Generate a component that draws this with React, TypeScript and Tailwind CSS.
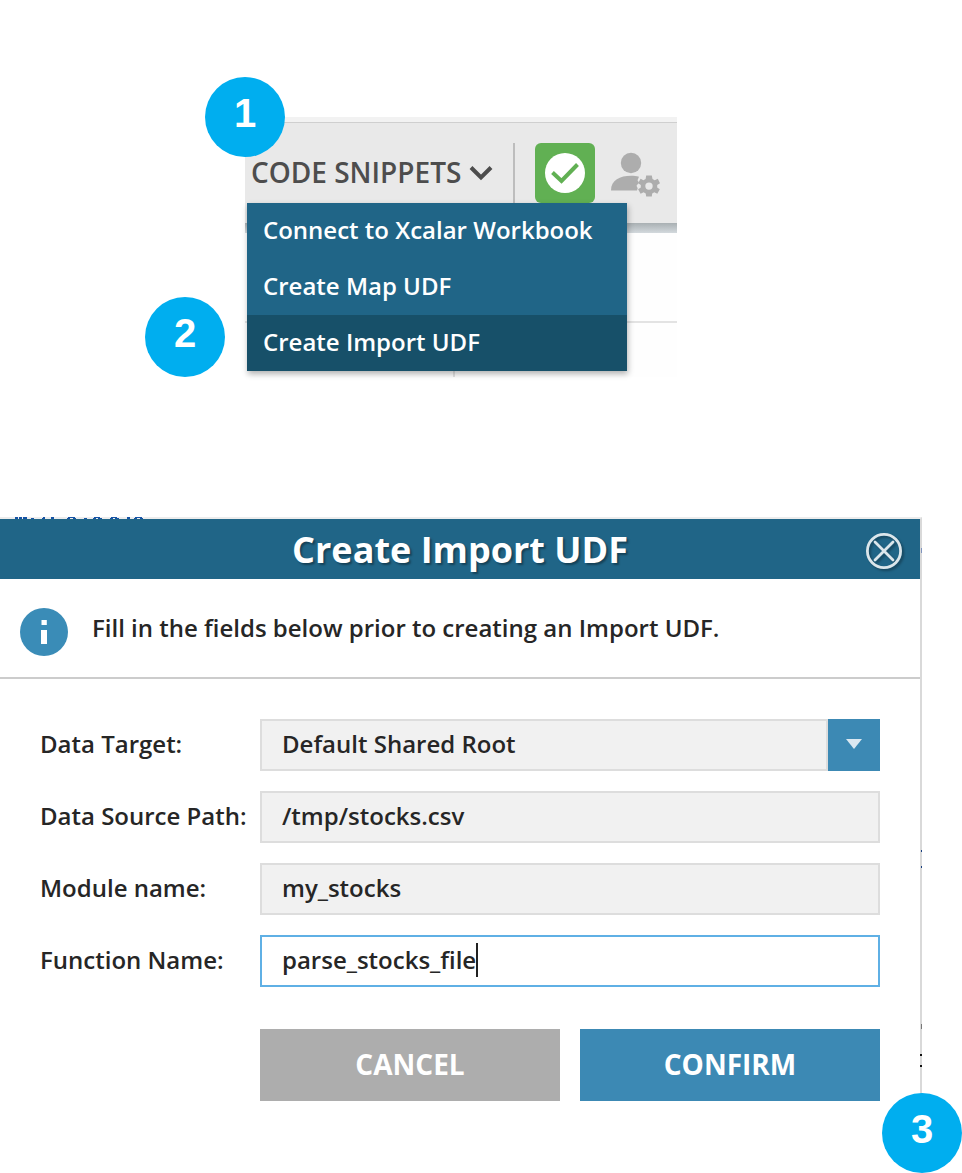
import { ReactNode, useState } from "react";

const menuItems = ["Connect to Xcalar Workbook", "Create Map UDF", "Create Import UDF"];

const inputClass =
  "h-[52px] w-full rounded-none border-2 px-5 text-2xl font-semibold leading-8 text-[#262626] outline-none";

function StepBadge({ children, className }: { children: ReactNode; className: string }) {
  return (
    <div
      className={`absolute z-20 flex size-20 items-center justify-center rounded-full bg-[#00aeef] pb-2 font-['Liberation_Sans',sans-serif] text-[40px] font-bold leading-[44px] text-white ${className}`}
    >
      {children}
    </div>
  );
}

function UserSettingsIcon() {
  return (
    <svg viewBox="0 0 50 46" className="h-[46px] w-[50px]" aria-hidden="true">
      <g fill="#adadad">
        <circle cx="20" cy="11" r="10.2" />
        <path d="M0 38.500C0 28 9 23.800 20 23.800c3 0 5.500.2 8 .9l-1.500 3.600 1.500 2.300-2.500 3.200 1.200 2.500-.7 2.200z" />
        <g transform="translate(38 34)">
          <path
            fillRule="evenodd"
            d="M-2.800-10.500H2.800L3.500-7 5.700-5.800 8.800-7.200 11-2.700 8.200-.9V1.500L10.800 3.300 8.300 7.700 5.300 6.200 3.200 7.400 2.800 10.500H-2.800L-3.300 7.400-5.400 6.200-8.400 7.700-10.900 3.300-8.200 1.500V-.9L-10.900-2.800-8.400-7.300-5.600-5.800-3.400-7ZM0-3.600A3.700 3.700 0 1 0 0 3.800 3.700 3.700 0 1 0 0-3.600Z"
          />
        </g>
      </g>
    </svg>
  );
}

function SnippetsToolbar() {
  return (
    <section className="relative ml-[245px] max-w-[432px] bg-[#fefefe]">
      <StepBadge className="-left-10 -top-10">1</StepBadge>
      <StepBadge className="-left-[100px] top-[180px]">2</StepBadge>

      <div className="h-[6px] border-b border-[#cfcfcf] bg-[#f2f2f2]" />
      <div className="flex h-[100px] items-center bg-[#e9e9e9]">
        <button
          type="button"
          className="flex items-center gap-2 whitespace-nowrap pl-[6px] text-[28px] font-semibold leading-9 text-[#4d4d4d]"
        >
          <span className="pb-0.5">CODE SNIPPETS</span>
          <svg viewBox="0 0 24 16" className="h-4 w-6" aria-hidden="true">
            <path d="M2 2.500 12 12.500 22 2.500" fill="none" stroke="#4d4d4d" strokeWidth="4" />
          </svg>
        </button>
        <div className="ml-5 h-[60px] w-0.5 shrink-0 bg-[#bdbdbd]" />
        <button
          type="button"
          aria-label="Status"
          className="ml-5 flex size-[60px] shrink-0 items-center justify-center rounded-md bg-[#61b053]"
        >
          <svg viewBox="0 0 40 40" className="size-10" aria-hidden="true">
            <circle cx="20" cy="20" r="20" fill="#fff" />
            <path d="M7.500 19.500 16.500 28 32.500 11.500" fill="none" stroke="#61b053" strokeWidth="4" />
          </svg>
        </button>
        <button type="button" aria-label="User settings" className="ml-4 pt-1">
          <UserSettingsIcon />
        </button>
      </div>
      <div className="h-[10px] bg-linear-to-b from-[#a9b0b3] to-[#d3d9dd]" />
      <div className="h-[90px] border-b-2 border-[#e3e3e3]" />
      <div className="ml-[208px] h-[54px] w-0.5 bg-[#e3e3e3]" />

      <ul className="absolute left-0.5 top-[86px] z-10 w-[380px] bg-[#206587] shadow-[1px_3px_6px_rgba(0,0,0,0.3)]">
        {menuItems.map((item) => (
          <li key={item}>
            <button
              type="button"
              className="h-14 w-full px-4 pb-0.5 text-left text-2xl font-semibold leading-8 text-white aria-[current=true]:bg-[#175069]"
              aria-current={item === "Create Import UDF"}
            >
              {item}
            </button>
          </li>
        ))}
      </ul>
    </section>
  );
}

function Field({ id, label, children }: { id: string; label: string; children: ReactNode }) {
  return (
    <div className="flex items-center">
      <label htmlFor={id} className="w-[220px] shrink-0 whitespace-nowrap pb-0.5 text-2xl font-semibold leading-8">
        {label}
      </label>
      <div className="relative min-w-0 flex-1">{children}</div>
    </div>
  );
}

/* Slivers of the editor's code that show past the dialog's edges. */
function CodeSlivers() {
  return (
    <>
      <svg viewBox="0 0 144 2" className="absolute -top-0.5 left-0 h-0.5 w-36" aria-hidden="true">
        <path
          d="M15 0h3v2h-3zM19 0h3v2h-3zM23 0h4v2h-4zM31 1h3v1h-3zM42 1h3v1h-3zM43 0h2v1h-2zM51 0h3v2h-3zM67 1h3v1h-3zM68 0h7v1h-7zM73 1h3v1h-3zM84 1h3v1h-3zM93 1h3v1h-3zM94 0h6v1h-6zM98 1h4v1h-4zM110 1h3v1h-3zM111 0h6v1h-6zM115 1h4v1h-4zM127 0h3v2h-3zM134 1h3v1h-3zM135 0h7v1h-7zM140 1h3v1h-3z"
          fill="#1453a5"
        />
      </svg>
      <svg viewBox="0 0 2 552" className="absolute -right-0.5 top-0 h-[552px] w-0.5" aria-hidden="true">
        <path d="M1 29h1v5h-1z" fill="#7f93bd" />
        <path d="M1 331h1v2h-1zM1 347h1v2h-1z" fill="#173f80" />
        <path d="M1 505h1v5h-1z" fill="#777" />
        <path d="M0 535h2v2h-2zM0 546h2v2h-2z" fill="#111" />
      </svg>
    </>
  );
}

function ImportDialog() {
  const [path, setPath] = useState("/tmp/stocks.csv");
  const [moduleName, setModuleName] = useState("my_stocks");
  const [fn, setFn] = useState("parse_stocks_file");
  return (
    <section className="relative mr-10 border-r-2 border-t-2 border-r-[#d9d9d9] border-t-[#ececec] pb-8 text-[#262626]">
      <CodeSlivers />
      <StepBadge className="-bottom-10 -right-[42px]">3</StepBadge>
      <header className="relative flex h-[60px] items-center justify-center bg-[#206587] pt-0.5">
        <h1 className="text-4xl font-bold text-white [text-shadow:2px_2px_2px_rgba(0,0,0,0.35)]">Create Import UDF</h1>
        <button type="button" aria-label="Close" className="absolute right-4 top-3">
          <svg viewBox="0 0 40 40" className="size-10 drop-shadow-[2px_2px_1px_rgba(0,0,0,0.3)]" aria-hidden="true">
            <g fill="none" stroke="#dbe6eb" strokeWidth="2.800" strokeLinecap="round">
              <circle cx="20" cy="20" r="16.600" />
              <path d="M11 11 29 29M29 11 11 29" />
            </g>
          </svg>
        </button>
      </header>
      <div className="flex h-[100px] items-center gap-6 border-b-2 border-[#cccccc] px-5">
        <svg viewBox="0 0 48 48" className="mt-2 size-12 shrink-0" aria-hidden="true">
          <circle cx="24" cy="24" r="24" fill="#3a8cb7" />
          <path d="M21.500 12h5.300v5h-5.300zM21 22h6v14h-6z" fill="#fff" />
        </svg>
        <p className="text-2xl font-semibold leading-8">Fill in the fields below prior to creating an Import UDF.</p>
      </div>
      <form className="px-10 pt-10" onSubmit={(e) => e.preventDefault()}>
        <div className="flex flex-col gap-5">
          <Field id="target" label="Data Target:">
            <select id="target" className={`${inputClass} appearance-none border-[#dddddd] bg-[#f1f1f1] pb-0.5`}>
              <option>Default Shared Root</option>
            </select>
            <span className="pointer-events-none absolute inset-y-0 right-0 flex w-[54px] items-center justify-center border-l-2 border-[#dddddd] bg-[#3c89b4]">
              <svg viewBox="0 0 16 10" className="mb-0.5 h-[10px] w-4" aria-hidden="true">
                <path d="M0 0h16L8 10z" fill="#dbe8f1" />
              </svg>
            </span>
          </Field>
          <Field id="path" label="Data Source Path:">
            <input
              id="path"
              className={`${inputClass} border-[#dddddd] bg-[#f1f1f1] pb-1`}
              value={path}
              onChange={(e) => setPath(e.target.value)}
            />
          </Field>
          <Field id="module" label="Module name:">
            <input
              id="module"
              className={`${inputClass} border-[#dddddd] bg-[#f1f1f1] pb-1`}
              value={moduleName}
              onChange={(e) => setModuleName(e.target.value)}
            />
          </Field>
          <Field id="fn" label="Function Name:">
            <input
              id="fn"
              className={`${inputClass} border-[#5fb0e5] bg-white pb-1 caret-transparent`}
              value={fn}
              onChange={(e) => setFn(e.target.value)}
            />
            <span className="pointer-events-none absolute left-[216px] top-2 h-[34px] w-0.5 bg-[#222]" />
          </Field>
        </div>
        <div className="ml-[220px] mt-[42px] grid grid-cols-2 gap-5">
          <button type="button" className="h-[72px] bg-[#adadad] pb-0.5 text-[28px] font-bold text-white">
            CANCEL
          </button>
          <button type="submit" className="h-[72px] bg-[#3c89b4] pb-0.5 text-[28px] font-bold text-white">
            CONFIRM
          </button>
        </div>
      </form>
    </section>
  );
}

export default function App() {
  return (
    <main className="overflow-x-hidden bg-white pb-10 pt-[117px] font-['Open_Sans',sans-serif]">
      <SnippetsToolbar />
      <div className="mt-[140px]">
        <ImportDialog />
      </div>
    </main>
  );
}
